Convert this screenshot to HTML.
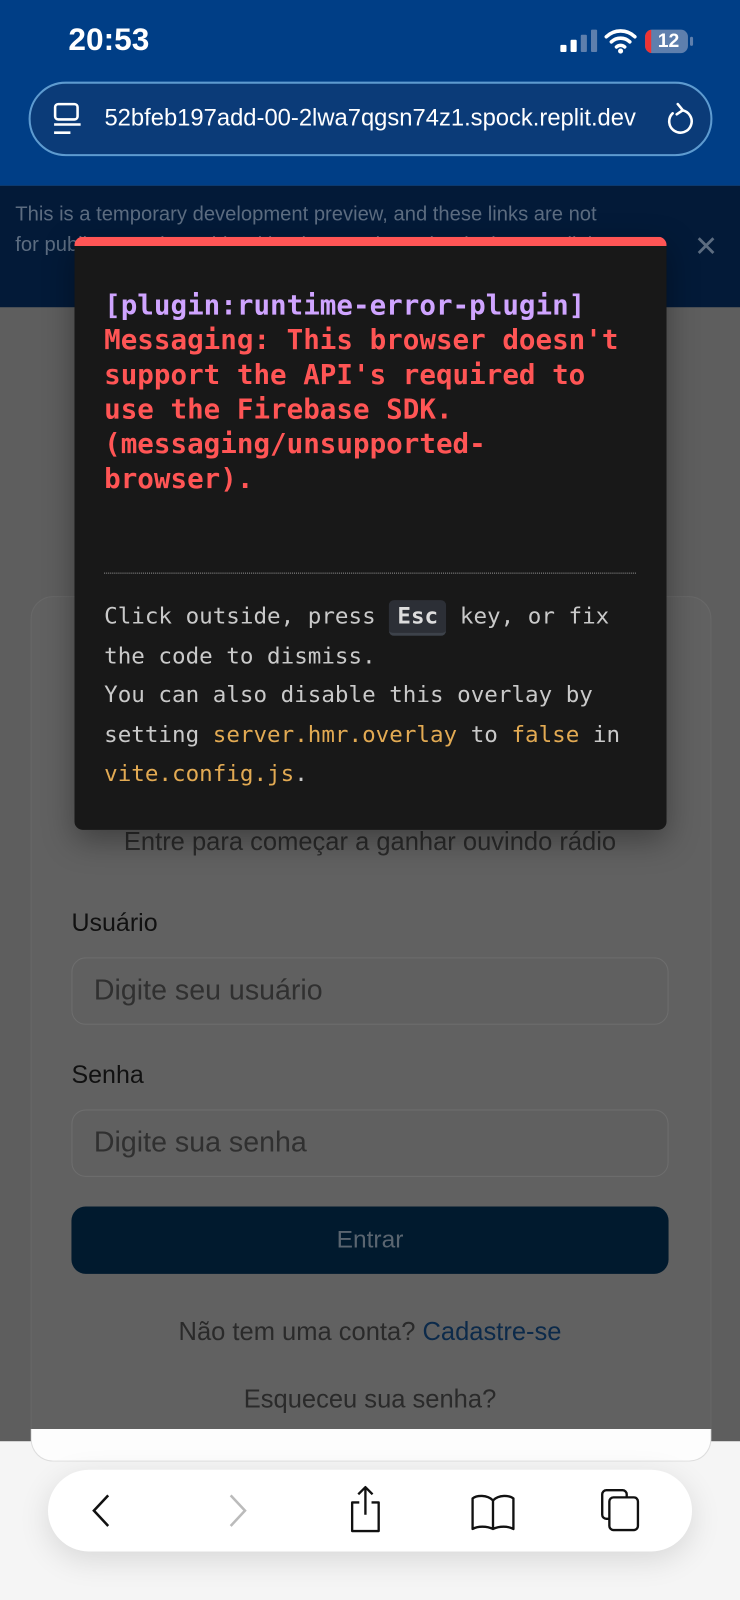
<!DOCTYPE html>
<html><head><meta charset="utf-8"><style>
*{margin:0;padding:0;box-sizing:border-box}
body{width:740px;height:1600px;position:relative;overflow:hidden;background:#f5f5f5;font-family:"Liberation Sans",sans-serif}
#w{position:absolute;left:0;top:0;width:725px;height:1568px;transform:scale(1.0207);transform-origin:0 0;background:#5e5e5e;overflow:hidden}
.a{position:absolute}
.mono{font-family:"DejaVu Sans Mono","Liberation Mono",monospace}
</style></head><body><div id="w">
<div class="a" style="left:0;top:0;width:725px;height:182px;background:#003e86"></div>
<div class="a" style="left:67px;top:21px;font-size:31px;font-weight:bold;color:#fff">20:53</div>
<div class="a" style="left:549px;top:44px;width:6px;height:7px;background:#fff;border-radius:1px"></div>
<div class="a" style="left:559px;top:39px;width:6px;height:12px;background:#fff;border-radius:1px"></div>
<div class="a" style="left:569px;top:34px;width:6px;height:17px;background:#5e7fad;border-radius:1px"></div>
<div class="a" style="left:579px;top:29px;width:6px;height:22px;background:#5e7fad;border-radius:1px"></div>
<svg class="a" style="left:592px;top:27px" width="32" height="26" viewBox="0 0 32 26"><path d="M2 9a20 20 0 0 1 28 0M7 14a13 13 0 0 1 18 0M12 19a6 6 0 0 1 8 0" stroke="#fff" stroke-width="3.5" fill="none" stroke-linecap="round"/><circle cx="16" cy="23" r="2.5" fill="#fff"/></svg>
<div class="a" style="left:632px;top:29px;width:42px;height:23px;border-radius:7px;background:#5e7fad;overflow:hidden"><div style="width:6px;height:23px;background:#e33"></div></div>
<div class="a" style="left:676px;top:36px;width:3px;height:9px;background:#5e7fad;border-radius:2px"></div>
<div class="a" style="left:640px;top:29px;width:30px;font-size:19px;font-weight:bold;color:#fff;text-align:center;line-height:23px">12</div>
<div class="a" style="left:28px;top:80px;width:670px;height:73px;border-radius:37px;border:2px solid #5e9bd0;background:#0b3b78"></div>
<svg class="a" style="left:51px;top:100px" width="30" height="32" viewBox="0 0 30 32"><rect x="3" y="2" width="22" height="15" rx="3" stroke="#fff" stroke-width="2.5" fill="none"/><path d="M2 22h26M2 30h16" stroke="#fff" stroke-width="2.5"/></svg>
<div class="a" style="left:103px;top:102px;width:520px;overflow:hidden;white-space:nowrap;direction:rtl;font-size:23.3px;color:#fff"><span style="direction:ltr;unicode-bidi:bidi-override">52bfeb197add-00-2lwa7qgsn74z1.spock.replit.dev</span></div>
<svg class="a" style="left:650px;top:99px" width="32" height="36" viewBox="0 0 32 36"><path d="M9 12a11 11 0 1 0 9-3" stroke="#fff" stroke-width="2.5" fill="none" stroke-linecap="round"/><path d="M14 3l5 6-6 4" stroke="#fff" stroke-width="2.5" fill="none" stroke-linecap="round"/></svg>
<div class="a" style="left:0;top:182px;width:725px;height:119px;background:#031a38"></div>
<div class="a" style="left:15px;top:195px;width:585px;font-size:19.8px;line-height:30px;color:#5c6c80">This is a temporary development preview, and these links are not for public use. Share this with others and use the deployment link.</div>
<div class="a" style="left:680px;top:225px;font-size:28px;color:#5c6c80">✕</div>
<div class="a" style="left:30px;top:584px;width:667px;height:848px;border-radius:22px;border:1px solid #686868;background:#616161"></div>
<div class="a" style="left:0;top:811px;width:725px;text-align:center;font-size:25px;color:#2a2a2a">Entre para começar a ganhar ouvindo rádio</div>
<div class="a" style="left:70px;top:891px;font-size:24.5px;color:#111">Usuário</div>
<div class="a" style="left:70px;top:938px;width:585px;height:66px;border:1px solid #6e6e6e;border-radius:14px;background:#606060"></div>
<div class="a" style="left:92px;top:954px;font-size:28px;color:#303030">Digite seu usuário</div>
<div class="a" style="left:70px;top:1040px;font-size:24.5px;color:#111">Senha</div>
<div class="a" style="left:70px;top:1087px;width:585px;height:66px;border:1px solid #6e6e6e;border-radius:14px;background:#606060"></div>
<div class="a" style="left:92px;top:1103px;font-size:28px;color:#303030">Digite sua senha</div>
<div class="a" style="left:70px;top:1182px;width:585px;height:66px;border-radius:14px;background:#011a2e;color:#5a6570;font-size:24px;text-align:center;line-height:66px">Entrar</div>
<div class="a" style="left:0;top:1291px;width:725px;text-align:center;font-size:25px;color:#2a2a2a">Não tem uma conta? <span style="color:#0c2a4a">Cadastre-se</span></div>
<div class="a" style="left:0;top:1357px;width:725px;text-align:center;font-size:25px;color:#2a2a2a">Esqueceu sua senha?</div>
<div class="a" style="left:0;top:1412px;width:725px;height:160px;background:#f5f5f5"></div>
<div class="a" style="left:30px;top:1400px;width:667px;height:32px;border:1px solid #ddd;border-top:none;border-radius:0 0 22px 22px;background:#fdfdfd"></div>
<div class="a" style="left:47px;top:1440px;width:631px;height:80px;border-radius:40px;background:#fff;box-shadow:0 8px 30px rgba(0,0,0,.12)"></div>
<svg class="a" style="left:84px;top:1460px" width="30" height="40" viewBox="0 0 30 40"><path d="M22 5L8 20l14 15" stroke="#111" stroke-width="2.5" fill="none"/></svg>
<svg class="a" style="left:218px;top:1460px" width="30" height="40" viewBox="0 0 30 40"><path d="M8 5l14 15L8 35" stroke="#bbb" stroke-width="2.5" fill="none"/></svg>
<svg class="a" style="left:338px;top:1454px" width="40" height="50" viewBox="0 0 40 50"><path d="M20 3v27M13 10l7-7 7 7M14 18H7v28h26V18h-7" stroke="#111" stroke-width="2.3" fill="none" stroke-linejoin="round"/></svg>
<svg class="a" style="left:459px;top:1462px" width="48" height="40" viewBox="0 0 48 40"><path d="M24 36V8C18 2 8 3 4 6v30c5-3 14-3 20 0c6-3 15-3 20 0V6c-4-3-14-4-20 2" stroke="#111" stroke-width="2.3" fill="none" stroke-linejoin="round"/></svg>
<svg class="a" style="left:588px;top:1458px" width="42" height="46" viewBox="0 0 42 46"><rect x="2" y="2" width="24" height="28" rx="4" stroke="#111" stroke-width="2.3" fill="none"/><rect x="9" y="9" width="28" height="32" rx="4" stroke="#111" stroke-width="2.3" fill="#fff"/></svg>
<div class="a" style="left:73px;top:232px;width:580px;height:581px;border-radius:8px;background:#181818;border-top:9px solid #ff5555;box-shadow:0 10px 30px rgba(0,0,0,.35)"></div>
<div class="a mono" style="left:102px;top:283px;width:545px;font-size:27px;line-height:34px;font-weight:bold;color:#ff5555;white-space:pre"><span style="color:#cfa4ff">[plugin:runtime-error-plugin]</span>
Messaging: This browser doesn't
support the API's required to
use the Firebase SDK.
(messaging/unsupported-
browser).</div>
<div class="a" style="left:102px;top:561px;width:521px;border-top:1px dotted #999"></div>
<div class="a mono" style="left:102px;top:585px;width:545px;font-size:22.1px;line-height:38.5px;color:#c9c9c9;white-space:pre">Click outside, press <span style="display:inline-block;background:#2c2f36;border-radius:5px;border-bottom:3px solid #3d424a;padding:0 8px;font-weight:bold;line-height:32px;color:#ddd">Esc</span> key, or fix
the code to dismiss.
You can also disable this overlay by
setting <span style="color:#e2aa53">server.hmr.overlay</span> to <span style="color:#e2aa53">false</span> in
<span style="color:#e2aa53">vite.config.js</span>.</div>
</div></body></html>
